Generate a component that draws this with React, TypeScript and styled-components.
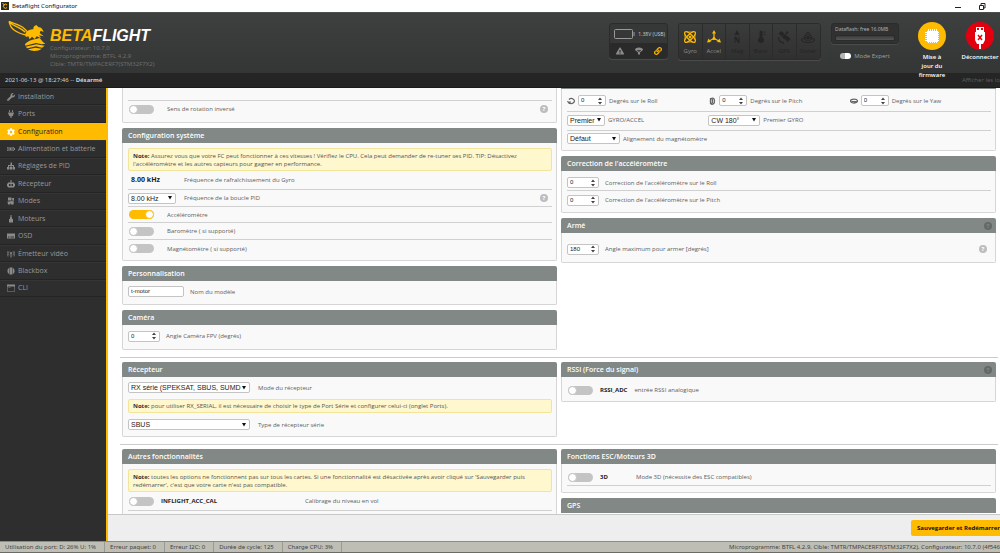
import React from "react";
import styled, { createGlobalStyle, css } from "styled-components";
import { FaWrench, FaPlug, FaCog, FaExclamationTriangle, FaLink } from "react-icons/fa";

const sans = `"Open Sans", "Noto Sans", sans-serif`;
const noto = `"Noto Sans", "Open Sans", sans-serif`;
const arial = `"Liberation Sans", Arial, sans-serif`;
const amber = "#ffbb00";

const GlobalStyle = createGlobalStyle`
  *, *::before, *::after { box-sizing: border-box; }
  body { margin: 0; background: #fff; font-family: ${sans}; font-size: 6px; color: #555; overflow: hidden; }
  button, input, select { font-family: inherit; margin: 0; }
  svg { display: block; flex: none; }
`;

const Page = styled.div`
  display: flex;
  flex-direction: column;
  height: 100vh;
  overflow: hidden;
`;

/* ---------- window title bar ---------- */
const TitleBar = styled.div`
  display: flex;
  align-items: center;
  gap: 3px;
  height: 12px;
  padding: 0 14px 0 1px;
  background: #fff;
  color: #111;
  font-family: ${noto};
  font-size: 6px;
  line-height: 12px;
  flex: none;
`;
const WindowButtons = styled.div`
  display: flex;
  gap: 16px;
  margin-left: auto;
  button { border: 0; background: none; padding: 0; width: 8px; height: 8px; }
`;

/* ---------- header ---------- */
const Header = styled.header`
  display: flex;
  align-items: flex-start;
  height: 61px;
  flex: none;
  padding: 7px 2px 0 8px;
  background: linear-gradient(#3e403f, #343535);
  border-top: 1px solid #4c4e4d;
`;
const Brand = styled.div`
  display: flex;
  gap: 3px;
`;
const BrandText = styled.div`
  padding-top: 8px;
  color: #6c6d6c;
  font-family: ${noto};
  font-size: 6px;
  line-height: 8px;
  white-space: nowrap;
`;
const WordMark = styled.div`
  font: italic 900 16px/16px ${arial};
  color: #fff;
  span { color: ${amber}; }
`;
const HeaderTools = styled.div`
  display: flex;
  align-items: flex-start;
  gap: 10px;
  margin-left: auto;
  padding-top: 3px;
`;
const Panel = styled.div`
  border: 1px solid #2a2b2a;
  border-radius: 3px;
  background: #363837;
  box-shadow: 0 1px 0 #4a4c4b;
  overflow: hidden;
`;
const BatteryPanel = styled(Panel)`
  width: 59px;
  height: 36px;
  color: #ccc;
  font-size: 5px;
`;
const BatteryTop = styled.div`
  display: flex;
  align-items: center;
  justify-content: space-between;
  height: 19px;
  padding: 0 2px 0 4px;
  white-space: nowrap;
`;
const BatteryBottom = styled.div`
  display: flex;
  align-items: center;
  justify-content: space-around;
  height: 15px;
  background: #292a29;
  color: #8b8b8b;
`;
const SensorPanel = styled(Panel)`
  display: grid;
  grid-template-columns: repeat(6, 1fr);
  width: 143px;
  height: 37px;
`;
const Sensor = styled.div<{ $on?: boolean }>`
  display: flex;
  flex-direction: column;
  align-items: center;
  padding-top: 6px;
  gap: 3px;
  border-right: 1px solid #2a2b2a;
  background: linear-gradient(#3a3c3b, #2f302f);
  font-size: 6px;
  line-height: 8px;
  color: ${(p) => (p.$on ? "#8d8d8d" : "#242524")};
  svg { color: ${(p) => (p.$on ? amber : "#242524")}; }
  &:last-child { border-right: 0; }
`;
const FlashColumn = styled.div`
  display: flex;
  flex-direction: column;
  align-items: center;
  gap: 8px;
  width: 68px;
  margin-right: 5px;
`;
const FlashPanel = styled(Panel)`
  width: 100%;
  height: 21px;
  padding: 1px 3px;
  color: #b0b0b0;
  font-family: ${noto};
  font-size: 5px;
  line-height: 8px;
  white-space: nowrap;
  background: #303130;
`;
const FlashBar = styled.div`
  height: 6px;
  margin-top: 2px;
  border-radius: 2px;
  background: linear-gradient(#3a3b3a, #565756);
  border: 1px solid #2a2b2a;
`;
const ExpertLabel = styled.label`
  display: flex;
  align-items: center;
  gap: 3px;
  color: #a0a0a0;
  font-size: 6px;
  line-height: 8px;
`;
const ExpertSwitch = styled.input`
  appearance: none;
  width: 11px;
  height: 6px;
  border-radius: 3px;
  background: linear-gradient(90deg, #b5b5b5 0 45%, #fff 45%);
`;
const Actions = styled.div`
  display: flex;
  gap: 12px;
  margin-top: -1px;
`;
const Action = styled.button`
  display: flex;
  flex-direction: column;
  align-items: center;
  gap: 3px;
  width: 36px;
  padding: 0;
  border: 0;
  background: none;
  color: #fff;
  font-weight: 600;
  font-size: 6px;
  line-height: 9px;
  white-space: nowrap;
  z-index: 1;
`;
const Disc = styled.span<{ $color: string }>`
  display: grid;
  place-items: center;
  width: 28px;
  height: 28px;
  border-radius: 50%;
  background: ${(p) => p.$color};
`;
const LogStrip = styled.div`
  display: flex;
  align-items: center;
  justify-content: space-between;
  height: 15px;
  flex: none;
  padding-left: 5px;
  background: #242524;
  border-bottom: 1px solid #1b1b1b;
  color: #d0d0d0;
  font-family: ${noto};
  font-size: 6px;
  line-height: 12px;
  a { color: #5a5b5a; text-decoration: none; }
`;

/* ---------- body ---------- */
const Body = styled.div`
  display: flex;
  flex: 1;
  min-height: 0;
`;
const Sidebar = styled.nav`
  width: 108px;
  flex: none;
  background: #2e2e2e;
  border-right: 2px solid ${amber};
`;
const TabList = styled.ul`
  display: flex;
  flex-direction: column;
  height: 209px;
  margin: 0;
  padding: 0;
  list-style: none;
  li { flex: 1; display: flex; }
`;
const Tab = styled.a<{ $active?: boolean }>`
  display: flex;
  align-items: center;
  flex: 1;
  gap: 3px;
  padding-left: 7px;
  font-size: 7px;
  line-height: 8px;
  text-decoration: none;
  color: #999;
  border-bottom: 1px solid #242424;
  border-top: 1px solid #353535;
  svg { color: #8a8a8a; }
  ${(p) =>
    p.$active &&
    css`
      background: ${amber};
      border-color: ${amber};
      color: #222;
      svg { color: #fff; }
    `}
`;
const Main = styled.main`
  flex: 1;
  min-width: 0;
  display: flex;
  flex-direction: column;
`;
const Scroller = styled.div`
  flex: 1;
  min-height: 0;
  overflow: hidden;
  padding: 0 2px 0 12px;
`;
const Section = styled.section`
  display: grid;
  grid-template-columns: 1fr 1fr;
  gap: 4px;
  align-items: start;
  padding: 4px 2px 7px;
  border-top: 1px solid #ccc;
  &:first-child { padding-top: 0; border-top: 0; }
`;
const Column = styled.div<{ $scrolled?: boolean }>`
  display: flex;
  flex-direction: column;
  gap: 5px;
  margin-top: ${(p) => (p.$scrolled ? "-14px" : "0")};
`;
const CardHead = styled.h2`
  display: flex;
  align-items: center;
  justify-content: space-between;
  height: 15px;
  margin: 0;
  padding: 0 4px 0 6px;
  border-radius: 2px 2px 0 0;
  background: #828885;
  color: #fff;
  font-size: 7px;
  line-height: 14px;
  font-weight: 600;
`;
const CardBody = styled.div<{ $top?: number; $bottom?: number }>`
  padding: ${(p) => p.$top ?? 5}px 4px ${(p) => p.$bottom ?? 3}px 5px;
  border: 1px solid #d6d6d6;
  border-top: 0;
  border-radius: 0 0 2px 2px;
  background: #f9f9f9;
`;
const Row = styled.div<{ $h: number; $line?: boolean; $gap?: number }>`
  display: flex;
  align-items: center;
  gap: ${(p) => p.$gap ?? 6}px;
  height: ${(p) => p.$h}px;
  border-bottom: ${(p) => (p.$line ? "1px solid #d0d0d0" : "0")};
  white-space: nowrap;
  color: #606060;
  line-height: 8px;
`;
const Thirds = styled.div<{ $h: number }>`
  display: grid;
  grid-template-columns: repeat(3, 1fr);
  height: ${(p) => p.$h}px;
  border-bottom: 1px solid #d0d0d0;
`;
const Note = styled.p<{ $spaced?: boolean }>`
  margin: ${(p) => (p.$spaced ? "6px 0" : "0")};
  padding: ${(p) => (p.$spaced ? "2px" : "3px")} 4px 2px;
  border: 1px solid #f2e59a;
  border-radius: 2px;
  background: #fff7cd;
  color: #555;
  line-height: 8px;
  white-space: nowrap;
  b { color: #333; }
`;
const Strong = styled.b<{ $w?: number }>`
  min-width: ${(p) => p.$w ?? 0}px;
  color: #222;
  font-weight: 700;
`;
const Rate = styled.b`
  width: 50px;
  padding-left: 3px;
  color: #222;
  font-size: 7px;
`;
const Toggle = styled.input`
  appearance: none;
  display: flex;
  width: 25px;
  height: 9px;
  margin-left: 1px;
  border-radius: 5px;
  background: #c4c4c4;
  flex: none;
  &::before {
    content: "";
    width: 9px;
    height: 9px;
    border: 1px solid #c4c4c4;
    border-radius: 50%;
    background: #fff;
  }
  &:checked { background: ${amber}; justify-content: flex-end; }
  &:checked::before { border-color: ${amber}; }
`;
const Field = styled.span<{ $w: number }>`
  display: flex;
  align-items: center;
  justify-content: space-between;
  width: ${(p) => p.$w}px;
  height: 11px;
  padding-right: 3px;
  flex: none;
  border: 1px solid #c4c4c4;
  border-radius: 2px;
  background: #fff;
  color: #222;
  input, select {
    appearance: none;
    flex: 1;
    width: 100%;
    min-width: 0;
    height: 9px;
    padding: 0 0 0 2px;
    border: 0;
    background: none;
    color: #222;
    font-family: ${arial};
    font-size: 6px;
    line-height: 9px;
    outline: 0;
  }
  select { font-size: 7px; }
  input[type="number"] { appearance: textfield; }
  input::-webkit-inner-spin-button { appearance: none; margin: 0; }
`;
const HelpMark = styled.span<{ $dark?: boolean }>`
  display: grid;
  place-items: center;
  width: 8px;
  height: 8px;
  margin: 0 ${(p) => (p.$dark ? 0 : 4)}px 0 auto;
  border-radius: 50%;
  background: ${(p) => (p.$dark ? "#646a67" : "#bdbdbd")};
  color: ${(p) => (p.$dark ? "#828885" : "#fff")};
  font-weight: 700;
  font-size: 6px;
  line-height: 8px;
`;
const Toolbar = styled.div`
  display: flex;
  align-items: center;
  justify-content: flex-end;
  height: 27px;
  flex: none;
  overflow: hidden;
  background: #eee;
  border-top: 1px solid #c8c8c8;
`;
const SaveButton = styled.button`
  height: 16px;
  padding: 0 0 0 6px;
  border: 0;
  border-radius: 2px 0 0 2px;
  background: ${amber};
  color: #111;
  font-weight: 700;
  font-size: 6px;
  line-height: 16px;
  white-space: nowrap;
`;
const StatusBar = styled.footer`
  display: flex;
  align-items: stretch;
  height: 12px;
  flex: none;
  background: #bfbeb5;
  border-top: 1px solid #8c8b86;
  border-bottom: 1px solid #6b6b66;
  color: #444;
  font-family: ${noto};
  font-size: 6px;
  line-height: 10px;
  white-space: nowrap;
`;
const StatusCell = styled.span`
  padding: 0 8px 0 5px;
  border-right: 1px solid #9b9a93;
`;
const StatusInfo = styled.span`
  margin-left: auto;
`;

/* ---------- drawings ---------- */
const Bee = () => (
  <svg width="39" height="33" viewBox="0 0 117 99" fill={amber}>
    <path d="M3 4C18 11 34 14 44 22q10 8 18 18M3 4q4 18 14 25c12 9 26 15 44 17M6 9c14 10 32 14 46 28" fill="none" stroke={amber} strokeWidth="4" strokeLinejoin="round" />
    <path d="M52 42c6-12 16-14 24-14-1-7 3-11 9-13l7 7c6-1 12 4 15 14l-9-4-3 7 12 10-14-3 6 9-13-6-6 8-8-7-7 8-4-9-8 2z" />
    <path d="M51 72c8-8 18-13 32-15l12-3 10 12 7 5-11 2-17-4-32 8zM53 80l32-7 25 4-8 6-18-4-26 6zM60 88l22-5 19 3c-10 8-28 9-41 2z" />
  </svg>
);
const Arrow = () => (
  <svg width="4" height="4" viewBox="0 0 8 8" fill="#111"><path d="M0 0h8L4 7z" /></svg>
);
const Spinner = () => (
  <svg width="4" height="8" viewBox="0 0 8 16" fill="#444"><path d="M0 6 4 1 8 6zM0 10h8L4 15z" /></svg>
);
const I = ({ children, s = 8 }: { children: React.ReactNode; s?: number }) => (
  <svg width={s} height={s} viewBox="0 0 16 16" fill="currentColor">{children}</svg>
);
const BatteryIcon = () => (
  <I><path fillRule="evenodd" d="M0 4h14v2h2v4h-2v2H0zm1 1v6h12V5z" /><path d="M3 6h2v4H3zM6 6h2v4H6zM9 6h2v4H9z" /></I>
);
const PidIcon = () => (
  <I><path d="M7 1h3v5h4v4h2v5h-5v-5h1V8H9v2h1v5H6v-5h1V8H4v2h1v5H0v-5h2V6h5z" /></I>
);
const ReceiverIcon = () => (
  <I><path d="M7 0h2v5h5v2h2v6h-2v2H2v-2H0V7h2V5h5z" /><path d="M4 8h2v4H4zM7 8h2v4H7zM10 8h2v4h-2z" fill="#2e2e2e" /></I>
);
const ModesIcon = () => (
  <I><path d="M2 1h7v6H2zM10 2h4v5l-3 1zM1 9h5l2-1 6 1-1 6H8l-1-3-1 3H2z" /></I>
);
const MotorIcon = () => (
  <I><path d="M7 0h2v4l1 1v3h2v7H4V8h2V5l1-1z" /></I>
);
const OsdIcon = () => (
  <I><path d="M0 3h16v10H0z" /><path d="M2 9h3v2H2zM7 9h7v2H7z" fill="#2e2e2e" /></I>
);
const VtxIcon = () => (
  <I>
    <path d="M7 7h2v8H7z" /><circle cx="8" cy="6" r="2" />
    <path d="M4 3q-2 4 0 8M12 3q2 4 0 8M2 2q-3 5 0 11M14 2q3 5 0 11" fill="none" stroke="currentColor" strokeWidth="1.300" />
  </I>
);
const BlackboxIcon = () => (
  <I><path d="M5 1h6v14H5zM2 3h2v10H2zM12 3h2v10h-2zM0 5h1v6H0zM15 5h1v6h-1z" /></I>
);
const CliIcon = () => (
  <I><path fillRule="evenodd" d="M0 1h16v14H0zm1 4v9h14V5z" /><path d="M3 7h4v1H3z" /></I>
);
const GyroIcon = () => (
  <svg width="14" height="14" viewBox="0 0 28 28" fill="none" stroke="currentColor" strokeWidth="2.500">
    <ellipse cx="14" cy="14" rx="14" ry="5" transform="rotate(45 14 14)" />
    <ellipse cx="14" cy="14" rx="14" ry="5" transform="rotate(-45 14 14)" />
    <path d="M8 4h12M8 24h12M4 8v12M24 8v12" strokeWidth="1.500" />
    <circle cx="14" cy="14" r="1.500" fill="currentColor" />
  </svg>
);
const AccelIcon = () => (
  <svg width="14" height="14" viewBox="0 0 28 28" fill="currentColor">
    <path d="M14 5v12M14 17 4 22M14 17l10 5" stroke="currentColor" strokeWidth="2.500" />
    <path d="M14 0l4 7h-8zM0 25l3-8 5 7zM28 25l-3-8-5 7z" /><circle cx="14" cy="17" r="3" />
  </svg>
);
const MagIcon = () => (
  <svg width="14" height="14" viewBox="0 0 28 28" fill="currentColor">
    <path d="M14 0l5 10H9zM9 13h3l5 8v-8h2v13h-3l-5-8v8H9z" />
  </svg>
);
const BaroIcon = () => (
  <svg width="14" height="14" viewBox="0 0 28 28" fill="currentColor">
    <path d="M11 4a3 3 0 0 1 6 0v11a6 6 0 1 1-6 0zM19 3h4v2h-4zM19 8h4v2h-4z" />
  </svg>
);
const GpsIcon = () => (
  <svg width="14" height="14" viewBox="0 0 28 28" fill="currentColor">
    <path d="M3 7l6-5 6 6-5 5zM16 17l5-5 6 6-6 6zM10 14l6-6 5 5-6 6zM4 14c0 6 4 10 10 10v3C6 27 2 22 2 14z" />
    <path d="M20 2l3 3-4 4-2-2z" />
  </svg>
);
const SonarIcon = () => (
  <svg width="14" height="14" viewBox="0 0 28 28" fill="none" stroke="currentColor" strokeWidth="2">
    <ellipse cx="14" cy="20" rx="13" ry="5" /><ellipse cx="14" cy="17" rx="8" ry="3.500" />
    <path d="M6 12q8-6 16 0M9 7q5-4 10 0" /><circle cx="14" cy="16" r="1.500" fill="currentColor" />
  </svg>
);
const ChipIcon = () => (
  <svg width="16" height="16" viewBox="0 0 16 16">
    <path d="M4.500 1v14M6.500 1v14M8.500 1v14M10.500 1v14M12.500 1v14M1 4.500h14M1 6.500h14M1 8.500h14M1 10.500h14M1 12.500h14" stroke="#fff" />
    <rect x="3" y="3" width="11" height="11" fill="#fff" />
  </svg>
);
const UsbIcon = () => (
  <svg width="12" height="26" viewBox="0 0 12 26" fill="#fff">
    <path fillRule="evenodd" d="M2 4h8v5H2zm1 1v2h2V5zm4 0v2h2V5z" />
    <path d="M1 9h10v8l-2 4H7v5H5v-5H3l-2-4z" />
    <path d="M4 12l4 5M8 12l-4 5" stroke="#e2000f" strokeWidth="1.500" />
  </svg>
);
const RollIcon = () => (
  <svg width="8" height="8" viewBox="0 0 16 16" fill="none" stroke="#666" strokeWidth="2.500">
    <path d="M4 11a6 5 0 1 0 0-6M1 8l3 4 3-3" />
  </svg>
);
const PitchIcon = () => (
  <svg width="8" height="8" viewBox="0 0 16 16" fill="none" stroke="#666" strokeWidth="2.500">
    <ellipse cx="9" cy="8" rx="4" ry="6" /><path d="M5 2v11l4 2M9 4v8" />
  </svg>
);
const YawIcon = () => (
  <svg width="8" height="8" viewBox="0 0 16 16" fill="none" stroke="#666" strokeWidth="2.500">
    <ellipse cx="8" cy="8" rx="7" ry="4" /><path d="M3 9h9l-3 3" />
  </svg>
);

/* ---------- composed parts ---------- */
const Num = ({ id, value, w = 32 }: { id: string; value: number; w?: number }) => (
  <Field $w={w}>
    <input id={id} type="number" defaultValue={value} />
    <Spinner />
  </Field>
);
const Pick = ({ id, value, w }: { id: string; value: string; w: number }) => (
  <Field $w={w}>
    <select id={id} defaultValue={value}>
      <option>{value}</option>
    </select>
    <Arrow />
  </Field>
);
const Card = ({ title, help, top, bottom, children }: {
  title?: string; help?: boolean; top?: number; bottom?: number; children?: React.ReactNode;
}) => (
  <div>
    <CardHead>{title}{help && <HelpMark $dark>?</HelpMark>}</CardHead>
    {children && <CardBody $top={top} $bottom={bottom}>{children}</CardBody>}
  </div>
);

const tabs: [string, React.ReactNode][] = [
  ["Installation", <FaWrench size={8} />],
  ["Ports", <FaPlug size={8} />],
  ["Configuration", <FaCog size={8} />],
  ["Alimentation et batterie", <BatteryIcon />],
  ["Réglages de PID", <PidIcon />],
  ["Récepteur", <ReceiverIcon />],
  ["Modes", <ModesIcon />],
  ["Moteurs", <MotorIcon />],
  ["OSD", <OsdIcon />],
  ["Émetteur vidéo", <VtxIcon />],
  ["Blackbox", <BlackboxIcon />],
  ["CLI", <CliIcon />],
];

const sensors: [string, React.ReactNode, boolean][] = [
  ["Gyro", <GyroIcon />, true],
  ["Accel", <AccelIcon />, true],
  ["Mag", <MagIcon />, false],
  ["Baro", <BaroIcon />, false],
  ["GPS", <GpsIcon />, false],
  ["Sonar", <SonarIcon />, false],
];

export default function App() {
  return (
    <Page>
      <GlobalStyle />
      <TitleBar>
        <svg width="8" height="8" viewBox="0 0 16 16">
          <rect width="16" height="16" fill="#2b2b20" />
          <path d="M3 3l5 3M12 6a4 4 0 1 0 0 5" stroke={amber} strokeWidth="2" fill="none" />
        </svg>
        Betaflight Configurator
        <WindowButtons>
          <button aria-label="Réduire">
            <svg width="8" height="8" viewBox="0 0 8 8"><path d="M1 5.500h6" stroke="#222" /></svg>
          </button>
          <button aria-label="Restaurer">
            <svg width="8" height="8" viewBox="0 0 8 8" fill="none" stroke="#222"><path d="M1.500 3.500h4v4h-4zM3 3V1.500h4V6H6" /></svg>
          </button>
        </WindowButtons>
      </TitleBar>

      <Header>
        <Brand>
          <Bee />
          <BrandText>
            <WordMark><span>BETA</span>FLIGHT</WordMark>
            Configurateur: 10.7.0<br />
            Microprogramme: BTFL 4.2.9<br />
            Cible: TMTR/TMPACERF7(STM32F7X2)
          </BrandText>
        </Brand>
        <HeaderTools>
          <BatteryPanel>
            <BatteryTop>
              <svg width="21" height="10" viewBox="0 0 21 10" fill="none" stroke="#999">
                <rect x="0.500" y="0.500" width="18" height="9" rx="1" /><path d="M20 3v4" />
              </svg>
              1.38V (USB)
            </BatteryTop>
            <BatteryBottom>
              <FaExclamationTriangle size={8} />
              <I><path d="M0 6q0-5 8-5t8 5l-6 5v4H6v-4zM4 7l3 3 1-3 1 3 3-3-2-1-2 1-2-1z" fillRule="evenodd" /></I>
              <FaLink size={8} color={amber} />
            </BatteryBottom>
          </BatteryPanel>
          <SensorPanel>
            {sensors.map(([name, icon, on]) => (
              <Sensor key={name} $on={on}>{icon}{name}</Sensor>
            ))}
          </SensorPanel>
          <FlashColumn>
            <FlashPanel>
              Dataflash: free 16.0MB
              <FlashBar />
            </FlashPanel>
            <ExpertLabel><ExpertSwitch type="checkbox" />Mode Expert</ExpertLabel>
          </FlashColumn>
          <Actions>
            <Action>
              <Disc $color={amber}><ChipIcon /></Disc>
              <span>Mise à<br />jour du<br />firmware</span>
            </Action>
            <Action>
              <Disc $color="#e2000f"><UsbIcon /></Disc>
              Déconnecter
            </Action>
          </Actions>
        </HeaderTools>
      </Header>
      <LogStrip>
        <span>2021-06-13 @ 18:27:46 -- <b>Désarmé</b></span>
        <a href="#log">Afficher les lo</a>
      </LogStrip>

      <Body>
        <Sidebar>
          <TabList>
            {tabs.map(([name, icon]) => (
              <li key={name}>
                <Tab href="#tab" $active={name === "Configuration"}>{icon}{name}</Tab>
              </li>
            ))}
          </TabList>
        </Sidebar>
        <Main>
          <Scroller>
            <Section>
              <Column>
                <CardBody $top={0} $bottom={5}>
                  <Row $h={13} $line />
                  <Row $h={16} $gap={13}>
                    <Toggle id="reverse" type="checkbox" />
                    <label htmlFor="reverse">Sens de rotation inversé</label>
                    <HelpMark>?</HelpMark>
                  </Row>
                </CardBody>
                <Card title="Configuration système">
                  <Note>
                    <b>Note:</b> Assurez vous que votre FC peut fonctionner à ces vitesses ! Vérifiez le CPU. Cela peut demander de re-tuner ses PID. TIP: Désactivez<br />
                    l'accéléromètre et les autres capteurs pour gagner en performance.
                  </Note>
                  <Row $h={19} $line>
                    <Rate>8.00 kHz</Rate>
                    <span>Fréquence de rafraîchissement du Gyro</span>
                  </Row>
                  <Row $h={17} $line $gap={8}>
                    <Pick id="pid" value="8.00 kHz" w={48} />
                    <label htmlFor="pid">Fréquence de la boucle PID</label>
                    <HelpMark>?</HelpMark>
                  </Row>
                  <Row $h={16} $line $gap={13}>
                    <Toggle id="acc" type="checkbox" defaultChecked />
                    <label htmlFor="acc">Accéléromètre</label>
                  </Row>
                  <Row $h={17} $line $gap={13}>
                    <Toggle id="baro" type="checkbox" />
                    <label htmlFor="baro">Baromètre ( si supporté)</label>
                  </Row>
                  <Row $h={17} $gap={13}>
                    <Toggle id="mag" type="checkbox" />
                    <label htmlFor="mag">Magnétomètre ( si supporté)</label>
                  </Row>
                </Card>
                <Card title="Personnalisation" bottom={7}>
                  <Row $h={11}>
                    <Field $w={56}><input id="name" type="text" defaultValue="t-motor" /></Field>
                    <label htmlFor="name">Nom du modèle</label>
                  </Row>
                </Card>
                <Card title="Caméra" bottom={7}>
                  <Row $h={12}>
                    <Num id="cam" value={0} />
                    <label htmlFor="cam">Angle Caméra FPV (degrés)</label>
                  </Row>
                </Card>
              </Column>
              <Column $scrolled>
                <Card top={1} bottom={4}>
                  <Thirds $h={22}>
                    <Row $h={21} $gap={3}><RollIcon /><Num id="roll" value={0} w={28} /><label htmlFor="roll">Degrés sur le Roll</label></Row>
                    <Row $h={21} $gap={3}><PitchIcon /><Num id="pitch" value={0} w={28} /><label htmlFor="pitch">Degrés sur le Pitch</label></Row>
                    <Row $h={21} $gap={3}><YawIcon /><Num id="yaw" value={0} w={28} /><label htmlFor="yaw">Degrés sur le Yaw</label></Row>
                  </Thirds>
                  <Thirds $h={19}>
                    <Row $h={16} $gap={3}><Pick id="gyro" value="Premier" w={38} /><label htmlFor="gyro">GYRO/ACCEL</label></Row>
                    <Row $h={16} $gap={3}><Pick id="align" value="CW 180°" w={52} /><label htmlFor="align">Premier GYRO</label></Row>
                  </Thirds>
                  <Row $h={15} $gap={3}>
                    <Pick id="magalign" value="Défaut" w={53} />
                    <label htmlFor="magalign">Alignement du magnétomètre</label>
                  </Row>
                </Card>
                <Card title="Correction de l'accéléromètre" top={4}>
                  <Row $h={16} $line>
                    <Num id="accroll" value={0} />
                    <label htmlFor="accroll">Correction de l'accéléromètre sur le Roll</label>
                  </Row>
                  <Row $h={18}>
                    <Num id="accpitch" value={0} />
                    <label htmlFor="accpitch">Correction de l'accéléromètre sur le Pitch</label>
                  </Row>
                </Card>
                <Card title="Armé" help bottom={2}>
                  <Row $h={22}>
                    <Num id="arm" value={180} />
                    <label htmlFor="arm">Angle maximum pour armer [degrés]</label>
                    <HelpMark>?</HelpMark>
                  </Row>
                </Card>
              </Column>
            </Section>

            <Section>
              <Card title="Récepteur" bottom={6}>
                <Row $h={11} $gap={8}>
                  <Pick id="rx" value="RX série (SPEKSAT, SBUS, SUMD" w={122} />
                  <label htmlFor="rx">Mode du récepteur</label>
                </Row>
                <Note $spaced>
                  <b>Note:</b> pour utiliser RX_SERIAL, il est nécessaire de choisir le type de Port Série et configurer celui-ci (onglet Ports).
                </Note>
                <Row $h={11} $gap={8}>
                  <Pick id="serial" value="SBUS" w={122} />
                  <label htmlFor="serial">Type de récepteur série</label>
                </Row>
              </Card>
              <Card title="RSSI (Force du signal)" help>
                <Row $h={16} $gap={7}>
                  <Toggle id="rssi" type="checkbox" />
                  <Strong>RSSI_ADC</Strong>
                  <label htmlFor="rssi">entrée RSSI analogique</label>
                </Row>
              </Card>
            </Section>

            <Section>
              <Card title="Autres fonctionnalités">
                <Note>
                  <b>Note:</b> toutes les options ne fonctionnent pas sur tous les cartes. Si une fonctionnalité est désactivée après avoir cliqué sur 'Sauvegarder puis<br />
                  redémarrer', c'est que votre carte n'est pas compatible.
                </Note>
                <Row $h={19} $line $gap={7}>
                  <Toggle id="inflight" type="checkbox" />
                  <Strong $w={137}>INFLIGHT_ACC_CAL</Strong>
                  <label htmlFor="inflight">Calibrage du niveau en vol</label>
                </Row>
              </Card>
              <Column>
                <Card title="Fonctions ESC/Moteurs 3D" bottom={6}>
                  <Row $h={17} $line $gap={7}>
                    <Toggle id="threeD" type="checkbox" />
                    <Strong $w={29}>3D</Strong>
                    <label htmlFor="threeD">Mode 3D (nécessite des ESC compatibles)</label>
                  </Row>
                </Card>
                <Card title="GPS" />
              </Column>
            </Section>
          </Scroller>
          <Toolbar>
            <SaveButton>Sauvegarder et Redémarrer</SaveButton>
          </Toolbar>
        </Main>
      </Body>

      <StatusBar>
        <StatusCell>Utilisation du port: D: 26% U: 1%</StatusCell>
        <StatusCell>Erreur paquet: 0</StatusCell>
        <StatusCell>Erreur I2C: 0</StatusCell>
        <StatusCell>Durée de cycle: 125</StatusCell>
        <StatusCell>Charge CPU: 3%</StatusCell>
        <StatusInfo>Microprogramme: BTFL 4.2.9, Cible: TMTR/TMPACERF7(STM32F7X2), Configurateur: 10.7.0 (4f546</StatusInfo>
      </StatusBar>
    </Page>
  );
}
